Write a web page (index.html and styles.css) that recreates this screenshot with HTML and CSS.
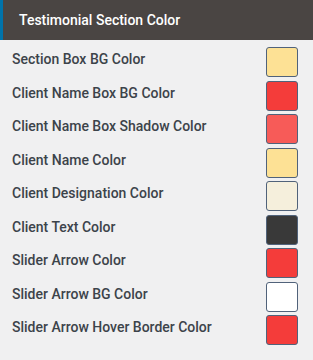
FILE: index.html
```html
<!DOCTYPE html>
<html lang="en">
<head>
    <meta charset="UTF-8">
    <meta name="viewport" content="width=device-width, initial-scale=1.0">
    <title>Testimonial Section Color</title>
    <link rel="stylesheet" href="styles.css">
</head>
<body>
    <div class="panel">
        <h3 class="panel-title">Testimonial Section Color</h3>
        <ul class="color-list">
            <li class="color-row">
                <span class="color-label">Section Box BG Color</span>
                <span class="swatch swatch-cream"></span>
            </li>
            <li class="color-row">
                <span class="color-label">Client Name Box BG Color</span>
                <span class="swatch swatch-red"></span>
            </li>
            <li class="color-row">
                <span class="color-label">Client Name Box Shadow Color</span>
                <span class="swatch swatch-coral"></span>
            </li>
            <li class="color-row">
                <span class="color-label">Client Name Color</span>
                <span class="swatch swatch-cream"></span>
            </li>
            <li class="color-row">
                <span class="color-label">Client Designation Color</span>
                <span class="swatch swatch-ivory"></span>
            </li>
            <li class="color-row">
                <span class="color-label">Client Text Color</span>
                <span class="swatch swatch-dark"></span>
            </li>
            <li class="color-row">
                <span class="color-label">Slider Arrow Color</span>
                <span class="swatch swatch-red"></span>
            </li>
            <li class="color-row">
                <span class="color-label">Slider Arrow BG Color</span>
                <span class="swatch swatch-white"></span>
            </li>
            <li class="color-row">
                <span class="color-label">Slider Arrow Hover Border Color</span>
                <span class="swatch swatch-red"></span>
            </li>
        </ul>
    </div>
</body>
</html>
```

FILE: styles.css
```css
body {
    margin: 0;
    background: #f0f0f1;
    font-family: Roboto, "Liberation Sans", sans-serif;
}

.panel {
    width: 313px;
}

.panel-title {
    margin: 0;
    height: 40px;
    box-sizing: border-box;
    padding-left: 16px;
    border-left: 3px solid #0073aa;
    background: #4a4543;
    color: #fff;
    font-size: 14px;
    font-weight: 500;
    line-height: 40px;
}

.color-list {
    list-style: none;
    margin: 0;
    padding: 7px 15px 0 12px;
}

.color-row {
    display: flex;
    justify-content: space-between;
    align-items: center;
    height: 30px;
    margin-bottom: 3.5px;
}

.color-label {
    color: #3c434a;
    font-size: 14px;
    font-weight: 500;
    padding-bottom: 6px;
}

.swatch {
    width: 30px;
    height: 28px;
    border: 1px solid #50627a;
    border-radius: 3px;
}

.swatch-cream { background: #fde195; }
.swatch-red { background: #f43c3a; }
.swatch-coral { background: #f75b58; }
.swatch-ivory { background: #f5efdc; }
.swatch-dark { background: #393939; }
.swatch-white { background: #ffffff; }
```
